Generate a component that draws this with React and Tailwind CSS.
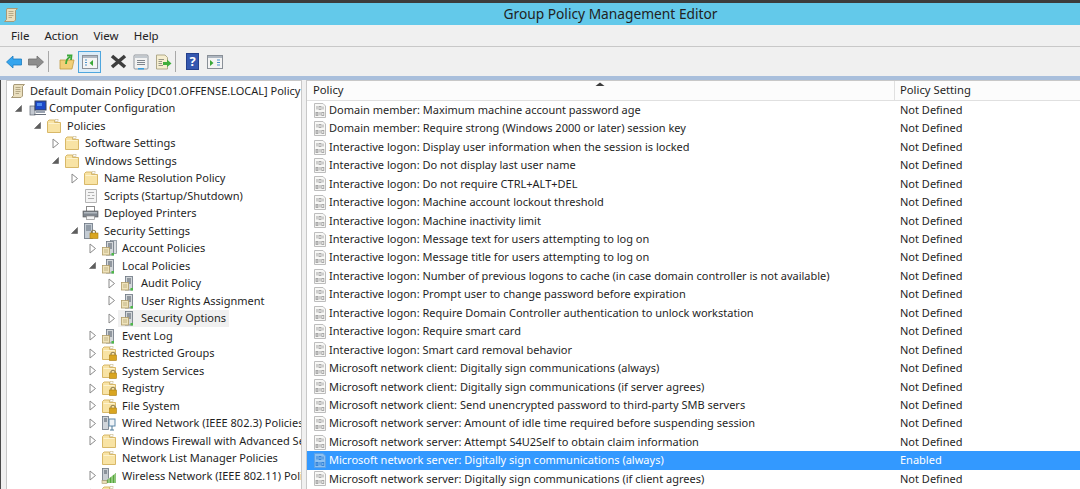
import React from 'react';

const FONT = { fontFamily: '"Noto Sans", "Open Sans", sans-serif' };

function Folder({ lock }) {
  return (
    <svg width="16" height="16" viewBox="0 0 16 16" className="shrink-0">
      <path d="M1.5 3.5 L1.5 14.5 L14.5 14.5 L14.5 4.5 L8.5 4.5 L8.5 2 L3 2 Z" fill="#f8e3a4" stroke="#d8b868" strokeWidth="1" />
      <path d="M2.5 5.5 H13.5" stroke="#fdf3cf" strokeWidth="1" />
      <rect x="9" y="1.5" width="3" height="2" fill="#fff" stroke="#c9b88a" strokeWidth="0.6" />
      {lock && (
        <g>
          <path d="M10 10 V8.5 A2.2 2.2 0 0 1 14 8.5 V10" fill="none" stroke="#8a7a50" strokeWidth="1.1" />
          <rect x="8.5" y="10" width="7" height="5.5" fill="#d9a520" stroke="#a87c10" strokeWidth="0.6" />
        </g>
      )}
    </svg>
  );
}

function Scroll() {
  return (
    <svg width="16" height="16" viewBox="0 0 16 16" className="shrink-0">
      <path d="M4 1.5 H14.5 L12.5 3.5 V13 L11 14.5 H1.5 L3.5 12.5 V3 Z" fill="#eadfbe" stroke="#a89a78" strokeWidth="1" />
      <path d="M5.5 4.5 H10.5 M5.5 6.5 H10.5 M5.5 8.5 H10.5 M5.5 10.5 H9" stroke="#a89a78" strokeWidth="0.8" />
    </svg>
  );
}

function Computer() {
  return (
    <svg width="18" height="16" viewBox="0 0 18 16" className="shrink-0 ml-[2px] -mr-[3px]">
      <rect x="1" y="6" width="5" height="9" fill="#c3c8d0" stroke="#5c6470" strokeWidth="0.7" />
      <rect x="6" y="1" width="11" height="9" fill="#1c49c8" stroke="#39455a" strokeWidth="1" />
      <rect x="8" y="3" width="5" height="3" fill="#4f8cf0" />
      <path d="M7 11 H16 V13 H7 Z" fill="#9aa3b0" />
      <path d="M5 14.5 H17" stroke="#68707c" strokeWidth="1" />
    </svg>
  );
}

function ScriptDoc() {
  return (
    <svg width="16" height="16" viewBox="0 0 16 16" className="shrink-0">
      <path d="M2.5 1.5 H13.5 V14.5 H2.5 Z" fill="#f4f4f4" stroke="#b4b4b4" strokeWidth="1" />
      <path d="M5 4.5 H11 M4.5 7.5 H7 M9 7.5 H11.5 M5 10.5 H11" stroke="#b0b0b0" strokeWidth="1" />
    </svg>
  );
}

function Printer() {
  return (
    <svg width="17" height="16" viewBox="0 0 17 16" className="shrink-0 -ml-[1px]">
      <rect x="4.5" y="1.5" width="8" height="5" fill="#fff" stroke="#8a8a8a" />
      <rect x="1" y="6" width="15" height="6" fill="#7f868e" stroke="#555" strokeWidth="0.6" />
      <rect x="2" y="7" width="13" height="1.5" fill="#b4bac0" />
      <rect x="4.5" y="11" width="8" height="3.5" fill="#f5f5f5" stroke="#8a8a8a" strokeWidth="0.7" />
    </svg>
  );
}

function SecurityIcon() {
  return (
    <svg width="16" height="16" viewBox="0 0 16 16" className="shrink-0">
      <rect x="1.5" y="0.5" width="8" height="15" fill="#c4ccd4" stroke="#6a7480" strokeWidth="0.8" />
      <path d="M3 3 H8 M3 5 H8 M3 7 H8" stroke="#5f6b78" strokeWidth="1" />
      <path d="M8.5 10 V8.5 A2.2 2.2 0 0 1 12.5 8.5 V10" fill="none" stroke="#8a7a50" strokeWidth="1.1" />
      <rect x="7" y="10" width="8" height="5.5" fill="#d9a520" stroke="#a87c10" strokeWidth="0.6" />
    </svg>
  );
}

function PolicyStack({ double }) {
  return (
    <svg width="16" height="16" viewBox="0 0 16 16" className="shrink-0">
      {double && <rect x="9.5" y="0.5" width="6" height="13" fill="#d8dce0" stroke="#7d8790" strokeWidth="0.7" />}
      <rect x="5.5" y="1.5" width="7" height="13.5" fill="#d3d7da" stroke="#6c7680" strokeWidth="0.8" />
      <path d="M7 4 H11 M7 6 H11 M7 8 H11" stroke="#4f5964" strokeWidth="1" />
      <rect x="1.5" y="7.5" width="7" height="7.5" fill="#efe3bb" stroke="#b09c68" strokeWidth="0.8" />
      <path d="M3 10 H7 M3 12 H7" stroke="#b8a878" strokeWidth="0.8" />
      <rect x="10.5" y="13" width="2.5" height="2.5" fill="#4cb848" />
    </svg>
  );
}

function WiredIcon() {
  return (
    <svg width="16" height="16" viewBox="0 0 16 16" className="shrink-0">
      <rect x="1.5" y="1.5" width="6" height="13" fill="#d0d5da" stroke="#6c7680" strokeWidth="0.8" />
      <path d="M3 4 H6 M3 6 H6" stroke="#4f5964" strokeWidth="1" />
      <rect x="8" y="4" width="6" height="7" fill="#eef2f6" stroke="#5f88a8" strokeWidth="1" />
      <path d="M11 11 V15 M9 15 H13" stroke="#4c7898" strokeWidth="1" />
    </svg>
  );
}

function WirelessIcon() {
  return (
    <svg width="16" height="16" viewBox="0 0 16 16" className="shrink-0">
      <rect x="1.5" y="0.5" width="6" height="12" fill="#c8cdd2" stroke="#6c7680" strokeWidth="0.8" />
      <path d="M3 3 H6 M3 5 H6" stroke="#4f5964" strokeWidth="1" />
      <path d="M2 15 L15 5 V15 Z" fill="#55a83c" />
      <path d="M5 15 V12.5 M8 15 V10 M11 15 V8 M14 15 V6" stroke="#e6f2d8" strokeWidth="0.8" />
      <rect x="1" y="12.5" width="5" height="3" fill="#e9dfb8" stroke="#a89a70" strokeWidth="0.6" />
    </svg>
  );
}

function BinaryDoc({ selected }) {
  const ink = selected ? '#2f80d8' : '#a2a2a2';
  const bg = selected ? '#8dc1f2' : '#f8f8f6';
  const edge = selected ? '#5fa2e6' : '#bdbdbd';
  return (
    <svg width="14" height="15" viewBox="0 0 14 15" className="shrink-0">
      <path d="M1.5 0.5 H10 L12.5 3 V14.5 H1.5 Z" fill={bg} stroke={edge} strokeWidth="1" />
      <path d="M4 3 V6.5 M10 3.5 V6.5 M4 9 V12.5 M7 9 V12.5" stroke={ink} strokeWidth="1" />
      <rect x="6" y="3.5" width="2" height="3" fill="none" stroke={ink} strokeWidth="0.9" />
      <rect x="8.8" y="9.5" width="2" height="3" fill="none" stroke={ink} strokeWidth="0.9" />
      <rect x="3" y="9.5" width="2" height="3" fill="none" stroke={ink} strokeWidth="0.9" />
    </svg>
  );
}

function Arrow({ state }) {
  if (state === 'open') {
    return (
      <svg width="9" height="9" viewBox="0 0 9 9" className="shrink-0">
        <path d="M7.5 1.5 V7.5 H1.5 Z" fill="#5e5e5e" stroke="#5e5e5e" strokeWidth="0.6" />
      </svg>
    );
  }
  if (state === 'closed') {
    return (
      <svg width="9" height="11" viewBox="0 0 9 11" className="shrink-0">
        <path d="M2 1 L7.5 5.5 L2 10 Z" fill="#fff" stroke="#8a8a8a" strokeWidth="1" />
      </svg>
    );
  }
  return <span className="w-[9px] shrink-0" />;
}

const treeIcons = {
  scroll: <Scroll />,
  computer: <Computer />,
  folder: <Folder />,
  lock: <Folder lock />,
  script: <ScriptDoc />,
  printer: <Printer />,
  security: <SecurityIcon />,
  stack: <PolicyStack />,
  stack2: <PolicyStack double />,
  wired: <WiredIcon />,
  wireless: <WirelessIcon />,
};

const tree = [
  { label: 'Default Domain Policy [DC01.OFFENSE.LOCAL] Policy', icon: 'scroll', level: 0, root: true },
  { label: 'Computer Configuration', icon: 'computer', level: 1, arrow: 'open' },
  { label: 'Policies', icon: 'folder', level: 2, arrow: 'open' },
  { label: 'Software Settings', icon: 'folder', level: 3, arrow: 'closed' },
  { label: 'Windows Settings', icon: 'folder', level: 3, arrow: 'open' },
  { label: 'Name Resolution Policy', icon: 'folder', level: 4, arrow: 'closed' },
  { label: 'Scripts (Startup/Shutdown)', icon: 'script', level: 4 },
  { label: 'Deployed Printers', icon: 'printer', level: 4 },
  { label: 'Security Settings', icon: 'security', level: 4, arrow: 'open' },
  { label: 'Account Policies', icon: 'stack2', level: 5, arrow: 'closed' },
  { label: 'Local Policies', icon: 'stack', level: 5, arrow: 'open' },
  { label: 'Audit Policy', icon: 'stack', level: 6, arrow: 'closed' },
  { label: 'User Rights Assignment', icon: 'stack', level: 6, arrow: 'closed' },
  { label: 'Security Options', icon: 'stack', level: 6, arrow: 'closed', active: true },
  { label: 'Event Log', icon: 'stack', level: 5, arrow: 'closed' },
  { label: 'Restricted Groups', icon: 'lock', level: 5, arrow: 'closed' },
  { label: 'System Services', icon: 'lock', level: 5, arrow: 'closed' },
  { label: 'Registry', icon: 'lock', level: 5, arrow: 'closed' },
  { label: 'File System', icon: 'lock', level: 5, arrow: 'closed' },
  { label: 'Wired Network (IEEE 802.3) Policies', icon: 'wired', level: 5, arrow: 'closed' },
  { label: 'Windows Firewall with Advanced Security', icon: 'folder', level: 5, arrow: 'closed' },
  { label: 'Network List Manager Policies', icon: 'folder', level: 5 },
  { label: 'Wireless Network (IEEE 802.11) Policies', icon: 'wireless', level: 5, arrow: 'closed' },
  { label: 'Public Key Policies', icon: 'folder', level: 5, arrow: 'closed' },
];

const indents = {
  0: 'pl-[3px]',
  1: 'pl-[7px]',
  2: 'pl-[26px]',
  3: 'pl-[44px]',
  4: 'pl-[63px]',
  5: 'pl-[81px]',
  6: 'pl-[100px]',
};

const policies = [
  ['Domain member: Maximum machine account password age', 'Not Defined'],
  ['Domain member: Require strong (Windows 2000 or later) session key', 'Not Defined'],
  ['Interactive logon: Display user information when the session is locked', 'Not Defined'],
  ['Interactive logon: Do not display last user name', 'Not Defined'],
  ['Interactive logon: Do not require CTRL+ALT+DEL', 'Not Defined'],
  ['Interactive logon: Machine account lockout threshold', 'Not Defined'],
  ['Interactive logon: Machine inactivity limit', 'Not Defined'],
  ['Interactive logon: Message text for users attempting to log on', 'Not Defined'],
  ['Interactive logon: Message title for users attempting to log on', 'Not Defined'],
  ['Interactive logon: Number of previous logons to cache (in case domain controller is not available)', 'Not Defined'],
  ['Interactive logon: Prompt user to change password before expiration', 'Not Defined'],
  ['Interactive logon: Require Domain Controller authentication to unlock workstation', 'Not Defined'],
  ['Interactive logon: Require smart card', 'Not Defined'],
  ['Interactive logon: Smart card removal behavior', 'Not Defined'],
  ['Microsoft network client: Digitally sign communications (always)', 'Not Defined'],
  ['Microsoft network client: Digitally sign communications (if server agrees)', 'Not Defined'],
  ['Microsoft network client: Send unencrypted password to third-party SMB servers', 'Not Defined'],
  ['Microsoft network server: Amount of idle time required before suspending session', 'Not Defined'],
  ['Microsoft network server: Attempt S4U2Self to obtain claim information', 'Not Defined'],
  ['Microsoft network server: Digitally sign communications (always)', 'Enabled', true],
  ['Microsoft network server: Digitally sign communications (if client agrees)', 'Not Defined'],
];

function Toolbar() {
  return (
    <div className="h-[29px] bg-[#f0f0f0] flex items-center pl-[6px] shrink-0">
      {/* back / forward */}
      <svg width="16" height="14" viewBox="0 0 16 14">
        <path d="M0.5 7 L7 1 V4 H15.5 V10 H7 V13 Z" fill="#35a5ee" stroke="#1c7cc0" strokeWidth="0.8" />
      </svg>
      <svg width="16" height="14" viewBox="0 0 16 14" className="ml-[6px]">
        <path d="M15.5 7 L9 1 V4 H0.5 V10 H9 V13 Z" fill="#8d8d8d" stroke="#6e6e6e" strokeWidth="0.8" />
      </svg>
      <div className="w-px h-[21px] bg-[#a8a8a8] ml-[4px]" />
      {/* up folder */}
      <svg width="16" height="16" viewBox="0 0 16 16" className="ml-[10px]">
        <path d="M1 6 H15 L13 15 H1 Z" fill="#f1cf78" stroke="#c09a40" strokeWidth="0.8" />
        <path d="M7 10 C7 6 9 4 11 3 M8 1.5 L12.5 1.5 L12 6" fill="none" stroke="#3aa838" strokeWidth="1.8" />
      </svg>
      {/* show/hide tree, active */}
      <div className="ml-[3px] w-[23px] h-[22px] border border-[#4fa6de] bg-[#dcecf8] flex items-center justify-center">
        <svg width="16" height="14" viewBox="0 0 16 14">
          <rect x="0.5" y="0.5" width="15" height="13" fill="#f4f4f4" stroke="#8a9098" />
          <rect x="1" y="1" width="14" height="2" fill="#aeb6c0" />
          <path d="M3 5 H5 M3 7.5 H5 M3 10 H5" stroke="#4a90c8" strokeWidth="1.2" />
          <path d="M11 5 V11 L7.5 8 Z" fill="#3aa838" />
        </svg>
      </div>
      {/* delete */}
      <svg width="17" height="15" viewBox="0 0 17 15" className="ml-[9px]">
        <path d="M2 2 L15 13 M15 2 L2 13" stroke="#3d3d3d" strokeWidth="3.6" />
      </svg>
      {/* properties */}
      <svg width="16" height="16" viewBox="0 0 16 16" className="ml-[6px]">
        <rect x="1" y="1" width="14" height="14" rx="1" fill="#f2f2f2" stroke="#8f959c" />
        <rect x="2" y="2" width="12" height="2" fill="#c2c8ce" />
        <path d="M4 6.5 H12 M4 8.5 H12 M4 10.5 H12" stroke="#7f868e" strokeWidth="1" />
        <rect x="5" y="14" width="6" height="1.5" fill="#38a0e0" />
      </svg>
      {/* export */}
      <svg width="17" height="16" viewBox="0 0 17 16" className="ml-[6px]">
        <path d="M1.5 1 H10 L12.5 3.5 V15 H1.5 Z" fill="#f6eed0" stroke="#a8a080" strokeWidth="0.9" />
        <path d="M3.5 5.5 H9 M3.5 7.5 H7 M3.5 9.5 H7 M3.5 11.5 H8" stroke="#8a8a80" strokeWidth="0.9" />
        <path d="M8 8 H12 V5.5 L16.5 9.5 L12 13 V11 H8 Z" fill="#3fae3c" />
      </svg>
      <div className="w-px h-[21px] bg-[#a8a8a8] ml-[3px]" />
      {/* help */}
      <div className="ml-[10px] w-[13px] h-[17px] bg-[#3558b0] border border-[#24408c] flex items-center justify-center text-white text-[13px] font-bold leading-none">?</div>
      {/* action pane */}
      <svg width="16" height="14" viewBox="0 0 16 14" className="ml-[8px]">
        <rect x="0.5" y="0.5" width="15" height="13" fill="#f4f4f4" stroke="#8a9098" />
        <rect x="1" y="1" width="14" height="2" fill="#aeb6c0" />
        <path d="M3 5 V11 L6.5 8 Z" fill="#3aa838" />
        <path d="M10 5 H13 M10 7.5 H13 M10 10 H13" stroke="#4a90c8" strokeWidth="1.2" />
      </svg>
    </div>
  );
}

export default function App() {
  return (
    <div className="w-[1080px] h-[489px] overflow-hidden flex flex-col bg-[#f0f0f0] text-[#1f1f1f]" style={FONT}>
      {/* Title bar */}
      <div className="h-[25px] shrink-0 border-t-[3px] border-[#3c3c3c] bg-[#63c9ea] flex items-center relative">
        <div className="absolute left-[3px] top-[4px]"><Scroll /></div>
        <div className="flex-1 text-center text-[13.75px] pl-[141px] text-[#222]">Group Policy Management Editor</div>
      </div>

      {/* Menu */}
      <div className="h-[22px] shrink-0 border-b border-[#c8c8c8] flex items-center pl-[11px] gap-[15px] text-[11.5px] text-[#222]">
        <span>File</span>
        <span>Action</span>
        <span>View</span>
        <span>Help</span>
      </div>

      <Toolbar />

      {/* Splitter strip */}
      <div className="h-[4px] shrink-0 bg-[#a9bfdc]" />

      {/* Panes */}
      <div className="flex-1 flex min-h-0 bg-[#f0f0f0]">
        <div className="w-px bg-[#4a4a4a] shrink-0" />
        {/* Tree */}
        <div className="ml-[5px] w-[296px] shrink-0 bg-white border-l border-t border-r border-[#c8c8c8] overflow-hidden pt-px">
          {tree.map((item) => {
            let spacing = 'ml-[4px]';
            if (item.root) spacing = '';
            if (item.active) spacing = 'ml-[2px] pl-[2px] pr-[3px] bg-[#f0f0f0]';
            return (
              <div key={item.label} className={`h-[17.5px] flex items-center text-[11px] whitespace-nowrap ${indents[item.level]}`}>
                {item.root ? null : <Arrow state={item.arrow} />}
                <div className={`flex items-center h-[17px] ${spacing}`}>
                  {treeIcons[item.icon]}
                  <span className={item.root ? 'ml-[4px]' : 'ml-[5px]'}>{item.label}</span>
                </div>
              </div>
            );
          })}
        </div>

        {/* Policy list */}
        <div className="ml-[4px] flex-1 min-w-0 bg-white border-l border-t border-[#c8c8c8] overflow-hidden">
          <div className="h-[20px] flex border-b border-[#e0e0e0] bg-[#fcfcfc] text-[11.25px] relative">
            <div className="w-[588px] px-[6px] flex items-center border-r border-[#e0e0e0]">Policy</div>
            <div className="flex-1 px-[5px] flex items-center">Policy Setting</div>
            <svg width="10" height="4" viewBox="0 0 10 4" className="absolute left-[288px] top-[1px]">
              <path d="M0.5 4 L5 0.5 L9.5 4 Z" fill="#3c3c3c" />
            </svg>
          </div>
          {policies.map(([name, setting, selected]) => (
            <div
              key={name}
              className={`h-[18.45px] flex items-center text-[11px] whitespace-nowrap ${selected ? 'bg-[#3399ff] text-white' : ''}`}
            >
              <div className="w-[588px] flex items-center pl-[6px]">
                <BinaryDoc selected={selected} />
                <span className="ml-[2px]">{name}</span>
              </div>
              <div className="pl-[5px]">{setting}</div>
            </div>
          ))}
        </div>
      </div>
    </div>
  );
}
